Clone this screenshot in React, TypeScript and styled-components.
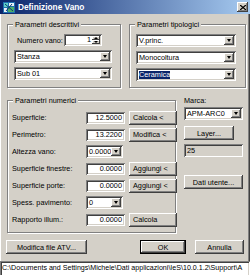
import React from "react";
import styled, { createGlobalStyle } from "styled-components";

const GlobalStyle = createGlobalStyle`
  html, body {
    margin: 0;
    padding: 0;
    background: #d4d0c8;
  }
  body {
    font-family: "Liberation Sans", Arial, sans-serif;
    font-size: 7.3px;
    color: #000;
  }
  * {
    box-sizing: border-box;
  }
`;

const sunken = `
  box-shadow: inset 1px 1px 0 #808080, inset -1px -1px 0 #ffffff,
    inset 2px 2px 0 #404040, inset -2px -2px 0 #d4d0c8;
`;

const raised = `
  box-shadow: inset -1px -1px 0 #404040, inset 1px 1px 0 #ffffff,
    inset -2px -2px 0 #808080, inset 2px 2px 0 #d4d0c8;
`;

export default function App() {
  return (
    <>
      <GlobalStyle />
      <Window>
        <TitleBar>
          <AppIcon />
          <TitleText>Definizione Vano</TitleText>
          <CloseButton>
            <svg width="6" height="5" viewBox="0 0 6 5">
              <path d="M0 0 L6 5 M6 0 L0 5" stroke="#000" strokeWidth="1.3" />
            </svg>
          </CloseButton>
        </TitleBar>

        <TopRow>
          <Group $height={64}>
            <Caption>Parametri descrittivi</Caption>
            <GroupBody $top={9} $left={6}>
              <SpinRow>
                <SpinLabel>Numero vano:</SpinLabel>
                <Field $width={38} $height={12} $align="right">
                  <FieldText>1</FieldText>
                  <SpinButtons>
                    <SpinArrow $up />
                    <SpinArrow />
                  </SpinButtons>
                </Field>
              </SpinRow>
              <Combo width={98} value="Stanza" />
              <Combo width={98} value="Sub 01" />
            </GroupBody>
          </Group>

          <Group $height={64}>
            <Caption>Parametri tipologici</Caption>
            <GroupBody $top={9} $left={6}>
              <Combo width={100} value="V.princ." />
              <Combo width={100} value="Monocoltura" />
              <Combo width={100} value="Ceramica" selected />
            </GroupBody>
          </Group>
        </TopRow>

        <MiddleRow>
          <NumericGroup>
            <Caption>Parametri numerici</Caption>
            <NumericGrid>
              <RowLabel>Superficie:</RowLabel>
              <NumberField>12.5000</NumberField>
              <SideButton>Calcola &lt;</SideButton>

              <RowLabel>Perimetro:</RowLabel>
              <NumberField>13.2200</NumberField>
              <SideButton>Modifica &lt;</SideButton>

              <RowLabel>Altezza vano:</RowLabel>
              <Combo width={37} value="0.0000" />
              <span />

              <RowLabel>Superficie finestre:</RowLabel>
              <NumberField>0.0000</NumberField>
              <SideButton>Aggiungi &lt;</SideButton>

              <RowLabel>Superficie porte:</RowLabel>
              <NumberField>0.0000</NumberField>
              <SideButton>Aggiungi &lt;</SideButton>

              <RowLabel>Spess. pavimento:</RowLabel>
              <Combo width={37} value="0" />
              <span />

              <RowLabel>Rapporto illum.:</RowLabel>
              <NumberField>0.0000</NumberField>
              <SideButton>Calcola</SideButton>
            </NumericGrid>
          </NumericGroup>

          <RightColumn>
            <MarcaLabel>Marca:</MarcaLabel>
            <Combo width={59} value="APM-ARC0" />
            <PushButton $width={50} $height={14} $mt={6}>
              Layer...
            </PushButton>
            <Field $width={59} $height={13} $disabled $mt={4}>
              <FieldText>25</FieldText>
            </Field>
            <PushButton $width={59} $height={14} $mt={18}>
              Dati utente...
            </PushButton>
          </RightColumn>
        </MiddleRow>

        <BottomRow>
          <PushButton $width={81} $height={14}>
            Modifica file ATV...
          </PushButton>
          <Spacer />
          <PushButton $width={46} $height={14} $default>
            OK
          </PushButton>
          <PushButton $width={49} $height={14}>
            Annulla
          </PushButton>
        </BottomRow>

        <PathBar>
          C:\Documents and Settings\Michele\Dati applicazioni\IeS\10.0.1.2\Support\A
        </PathBar>
      </Window>
    </>
  );
}

function Combo({
  width,
  value,
  selected,
}: {
  width: number;
  value: string;
  selected?: boolean;
}) {
  return (
    <Field $width={width} $height={13}>
      <FieldText>
        {selected ? <Selection>{value}</Selection> : value}
      </FieldText>
      <DropButton>
        <Triangle />
      </DropButton>
    </Field>
  );
}

function AppIcon() {
  return (
    <svg width="12" height="11" viewBox="0 0 12 11">
      <rect x="0" y="0" width="12" height="11" fill="#1f6fb0" />
      <rect x="1" y="1" width="4" height="4" fill="#5fd0c8" />
      <rect x="6" y="1" width="5" height="3" fill="#e8f0f8" />
      <rect x="1" y="6" width="3" height="4" fill="#e8f0f8" />
      <rect x="5" y="5" width="6" height="5" fill="#4cae6a" />
      <path d="M2 2 L10 9 M9 2 L3 9" stroke="#0a3a70" strokeWidth="1" />
    </svg>
  );
}

const Window = styled.div`
  width: 250px;
  height: 275px;
  overflow: hidden;
  display: flex;
  flex-direction: column;
  background: #d4d0c8;
  box-shadow: inset 1px 0 0 #ffffff, inset -1px 0 0 #404040,
    inset -2px 0 0 #808080;
`;

const TitleBar = styled.div`
  height: 14px;
  flex-shrink: 0;
  display: flex;
  align-items: center;
  gap: 3px;
  padding: 0 2px 0 3px;
  background: linear-gradient(to right, #0a246a, #a6caf0);
`;

const TitleText = styled.span`
  flex: 1;
  color: #ffffff;
  font-weight: bold;
  font-size: 8.3px;
  white-space: nowrap;
`;

const CloseButton = styled.div`
  width: 11px;
  height: 10px;
  display: flex;
  align-items: center;
  justify-content: center;
  background: #d4d0c8;
  ${raised}
`;

const TopRow = styled.div`
  display: grid;
  grid-template-columns: 114px 117px;
  column-gap: 8px;
  padding-left: 7px;
  margin-top: 10px;
`;

const Group = styled.div<{ $height: number }>`
  position: relative;
  height: ${(p) => p.$height}px;
  border: 1px solid #808080;
  box-shadow: inset 1px 1px 0 #ffffff, 1px 1px 0 #ffffff;
`;

const Caption = styled.span`
  position: absolute;
  top: -5px;
  left: 5px;
  padding: 0 2px;
  line-height: 9px;
  background: #d4d0c8;
  white-space: nowrap;
`;

const GroupBody = styled.div<{ $top: number; $left: number }>`
  display: flex;
  flex-direction: column;
  gap: 4px;
  padding: ${(p) => p.$top}px 0 0 ${(p) => p.$left}px;
`;

const SpinRow = styled.div`
  display: flex;
  align-items: center;
  gap: 2px;
  padding-left: 3px;
`;

const SpinLabel = styled.span`
  width: 45px;
  white-space: nowrap;
`;

const Field = styled.div<{
  $width: number;
  $height: number;
  $align?: "left" | "right";
  $disabled?: boolean;
  $mt?: number;
}>`
  width: ${(p) => p.$width}px;
  height: ${(p) => p.$height}px;
  margin-top: ${(p) => p.$mt ?? 0}px;
  flex-shrink: 0;
  display: flex;
  align-items: center;
  padding: 2px;
  background: ${(p) => (p.$disabled ? "#d4d0c8" : "#ffffff")};
  text-align: ${(p) => p.$align ?? "left"};
  ${sunken}
`;

const FieldText = styled.span`
  flex: 1;
  padding: 0 1px;
  overflow: hidden;
  white-space: nowrap;
  line-height: 8px;
`;

const Selection = styled.span`
  background: #0a246a;
  color: #ffffff;
`;

const DropButton = styled.div`
  width: 10px;
  height: 9px;
  display: flex;
  align-items: center;
  justify-content: center;
  background: #d4d0c8;
  ${raised}
`;

const Triangle = styled.span`
  width: 0;
  height: 0;
  border-left: 2.5px solid transparent;
  border-right: 2.5px solid transparent;
  border-top: 3px solid #000;
`;

const SpinButtons = styled.div`
  width: 8px;
  height: 8px;
  display: flex;
  flex-direction: column;
`;

const SpinArrow = styled.div<{ $up?: boolean }>`
  flex: 1;
  display: flex;
  align-items: center;
  justify-content: center;
  background: #d4d0c8;
  box-shadow: inset -1px -1px 0 #404040, inset 1px 1px 0 #ffffff;

  &::after {
    content: "";
    border-left: 2px solid transparent;
    border-right: 2px solid transparent;
    ${(p) =>
      p.$up ? "border-bottom: 2px solid #000;" : "border-top: 2px solid #000;"}
  }
`;

const MiddleRow = styled.div`
  display: grid;
  grid-template-columns: 169px 60px;
  column-gap: 8px;
  align-items: start;
  padding-left: 7px;
  margin-top: 9px;
`;

const NumericGroup = styled.div`
  position: relative;
  margin-top: 3px;
  height: 133px;
  border: 1px solid #808080;
  box-shadow: inset 1px 1px 0 #ffffff, 1px 1px 0 #ffffff;
`;

const NumericGrid = styled.div`
  display: grid;
  grid-template-columns: 70px 39px 48px;
  grid-auto-rows: 13px;
  column-gap: 4px;
  row-gap: 4px;
  align-items: center;
  padding: 10px 0 0 4px;
`;

const RowLabel = styled.span`
  white-space: nowrap;
`;

const NumberField = styled.div`
  height: 12px;
  padding: 2px 3px;
  background: #ffffff;
  text-align: right;
  line-height: 8px;
  white-space: nowrap;
  ${sunken}
`;

const SideButton = styled.div`
  height: 14px;
  display: flex;
  align-items: center;
  padding-left: 4px;
  background: #d4d0c8;
  white-space: nowrap;
  ${raised}
`;

const RightColumn = styled.div`
  display: flex;
  flex-direction: column;
  align-items: flex-start;
`;

const MarcaLabel = styled.span`
  line-height: 8px;
  margin-bottom: 2px;
`;

const PushButton = styled.div<{
  $width: number;
  $height: number;
  $mt?: number;
  $default?: boolean;
}>`
  width: ${(p) => p.$width}px;
  height: ${(p) => p.$height}px;
  margin-top: ${(p) => p.$mt ?? 0}px;
  flex-shrink: 0;
  display: flex;
  align-items: center;
  justify-content: center;
  background: #d4d0c8;
  white-space: nowrap;
  ${(p) =>
    p.$default
      ? `box-shadow: inset 0 0 0 1px #000000, inset -2px -2px 0 #404040,
          inset 2px 2px 0 #ffffff, inset -3px -3px 0 #808080;`
      : raised}
`;

const BottomRow = styled.div`
  display: flex;
  align-items: center;
  gap: 9px;
  padding: 0 6px;
  margin-top: 7px;
`;

const Spacer = styled.div`
  flex: 1;
`;

const PathBar = styled.div`
  margin-top: 7px;
  height: 16px;
  flex-shrink: 0;
  padding: 3px 2px;
  background: #ffffff;
  white-space: nowrap;
  overflow: hidden;
  line-height: 9px;
  font-size: 7.1px;
  ${sunken}
`;
